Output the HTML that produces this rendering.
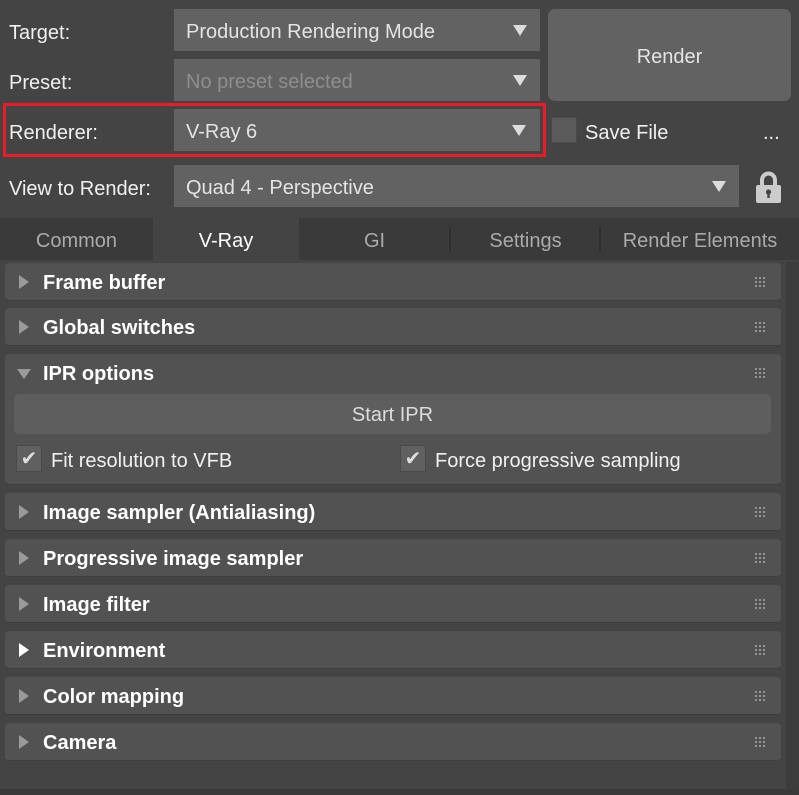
<!DOCTYPE html>
<html><head><meta charset="utf-8"><style>
*{margin:0;padding:0;box-sizing:border-box}
body{width:799px;height:795px;background:#444;position:relative;overflow:hidden;font-family:"Liberation Sans",sans-serif;font-size:20px;color:#f0f0f0}
.a{position:absolute}
.lbl{position:absolute;left:9px;line-height:24px}
.dd{position:absolute;background:#626262;left:174px;width:366px;height:42px;line-height:46px;padding-left:12px;color:#e4e4e4}
.tri{position:absolute;width:0;height:0;border-left:7px solid transparent;border-right:7px solid transparent;border-top:11px solid #ddd}
.tab{position:absolute;top:218px;height:42px;line-height:47px;text-align:center;color:#aaa}
.pn{position:absolute;left:5px;width:776px;height:38px;background:#525252;border-radius:4px;border-bottom:1px solid #3e3e3e}
.pn b{position:absolute;left:38px;top:9px;font-size:20px;color:#fff}
.pn i{position:absolute;left:14px;top:12px;width:0;height:0;border-top:7px solid transparent;border-bottom:7px solid transparent;border-left:10px solid #9a9a9a}
.grip{position:absolute;right:16px;top:13px;width:11px;height:11px;background-image:radial-gradient(circle,#999 1px,transparent 1.2px);background-size:4px 4px}
.cb{position:absolute;width:26px;height:27px;background:#606060;border:1px solid #4a4a4a;color:#ddd;font-size:20px;line-height:26px;text-align:center}
</style></head><body>
<div class="lbl" style="top:21px">Target:</div>
<div class="dd" style="top:9px">Production Rendering Mode</div>
<div class="tri" style="left:513px;top:25px"></div>
<div class="lbl" style="top:71px">Preset:</div>
<div class="dd" style="top:59px;color:#8e8e8e">No preset selected</div>
<div class="tri" style="left:513px;top:75px"></div>
<div class="a" style="left:3px;top:103px;width:543px;height:54px;border:3px solid #ec1c24"></div>
<div class="lbl" style="top:121px">Renderer:</div>
<div class="dd" style="top:109px">V-Ray 6</div>
<div class="tri" style="left:512px;top:125px"></div>
<div class="a" style="left:548px;top:9px;width:243px;height:92px;background:#626262;border-radius:7px;text-align:center;line-height:96px;color:#e4e4e4">Render</div>
<div class="a" style="left:551px;top:117px;width:26px;height:26px;background:#5a5a5a;border:1px solid #4a4a4a"></div>
<div class="a" style="left:585px;top:121px;line-height:24px">Save File</div>
<div class="a" style="left:763px;top:121px;line-height:24px">...</div>
<div class="lbl" style="top:177px">View to Render:</div>
<div class="dd" style="top:165px;width:565px">Quad 4 - Perspective</div>
<div class="tri" style="left:712px;top:181px"></div>
<svg class="a" style="left:755px;top:170px" width="27" height="33" viewBox="0 0 27 33"><path d="M7 16V10a6.5 6.5 0 0 1 13 0v6" fill="none" stroke="#ccc" stroke-width="4"/><rect x="1" y="15" width="25" height="18" rx="2" fill="#ccc"/><circle cx="13.5" cy="22" r="2.6" fill="#444"/><rect x="12.3" y="22" width="2.4" height="6" fill="#444"/></svg>
<div class="a" style="left:0;top:218px;width:799px;height:42px;background:#3a3a3a"></div>
<div class="tab" style="left:0;width:153px">Common</div>
<div class="tab" style="left:153px;width:146px;background:#444;color:#fff">V-Ray</div>
<div class="tab" style="left:299px;width:151px">GI</div>
<div class="a" style="left:449px;top:227px;width:2px;height:24px;background:#2e2e2e"></div>
<div class="tab" style="left:451px;width:149px">Settings</div>
<div class="a" style="left:599px;top:227px;width:2px;height:24px;background:#2e2e2e"></div>
<div class="tab" style="left:601px;width:198px">Render Elements</div>
<div class="a" style="left:786px;top:262px;width:13px;height:528px;background:#3c3c3c"></div>
<div class="a" style="left:0;top:789px;width:799px;height:6px;background:#3a3a3a"></div>

<div class="pn" style="top:263px"><i></i><b>Frame buffer</b><div class="grip"></div></div>
<div class="pn" style="top:308px"><i></i><b>Global switches</b><div class="grip"></div></div>
<div class="pn" style="top:354px;height:131px"><i style="top:15px;left:12px;border-left:7px solid transparent;border-right:7px solid transparent;border-top:10px solid #9a9a9a;border-bottom:0"></i><b>IPR options</b><div class="grip"></div>
<div class="a" style="left:9px;top:40px;width:757px;height:40px;background:#5e5e5e;border-radius:5px;text-align:center;line-height:43px;color:#ddd">Start IPR</div>
<div class="cb" style="left:11px;top:91px">✔</div>
<div class="a" style="left:46px;top:95px;line-height:24px;color:#f0f0f0">Fit resolution to VFB</div>
<div class="cb" style="left:395px;top:91px">✔</div>
<div class="a" style="left:430px;top:95px;line-height:24px;color:#f0f0f0">Force progressive sampling</div>
</div>
<div class="pn" style="top:493px"><i></i><b>Image sampler (Antialiasing)</b><div class="grip"></div></div>
<div class="pn" style="top:539px"><i></i><b>Progressive image sampler</b><div class="grip"></div></div>
<div class="pn" style="top:585px"><i></i><b>Image filter</b><div class="grip"></div></div>
<div class="pn" style="top:631px"><i style="border-left-color:#fff"></i><b>Environment</b><div class="grip"></div></div>
<div class="pn" style="top:677px"><i></i><b>Color mapping</b><div class="grip"></div></div>
<div class="pn" style="top:723px"><i></i><b>Camera</b><div class="grip"></div></div>
</body></html>
